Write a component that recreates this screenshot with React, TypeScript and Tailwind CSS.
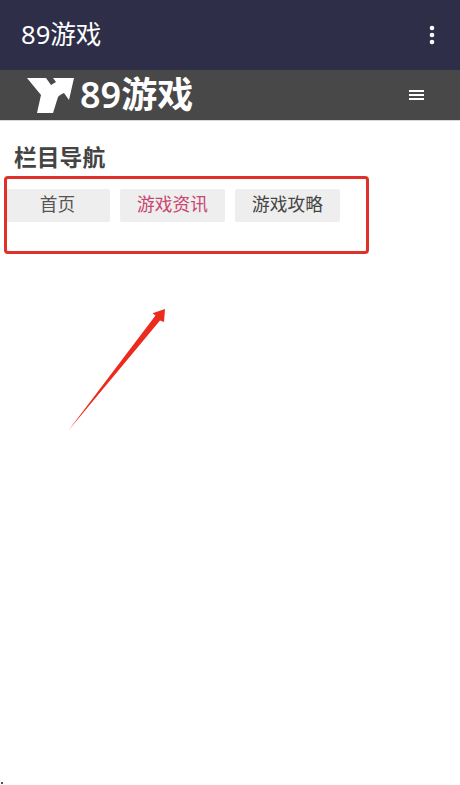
import { EllipsisVertical } from 'lucide-react';

const cjk = { fontFamily: '"Noto Sans", "Noto Sans CJK SC", sans-serif' };

function Logo() {
  return (
    <svg width="48" height="36" viewBox="0 0 48 36" className="shrink-0">
      <path d="M0 1 H19 L24 8 L29 5 L26 1 H47 L42 23 L37 16 C34 17 32 19 31 20 L26 36 H10 L14 18 Z" fill="#fff" />
    </svg>
  );
}

export default function App() {
  const navItems = [
    { label: '首页', color: 'text-[#555555]' },
    { label: '游戏资讯', color: 'text-[#c8466f]' },
    { label: '游戏攻略', color: 'text-[#444444]' },
  ];

  return (
    <div className="relative w-[460px] h-[785px] bg-white overflow-hidden" style={cjk}>
      {/* App bar */}
      <div className="h-[70px] bg-[#2e2e48] flex items-center justify-between pl-[21px] pr-[16px]">
        <span className="text-[25.6px] text-white">89游戏</span>
        <EllipsisVertical size={24} color="#fff" strokeWidth={2.6} />
      </div>

      {/* Site banner */}
      <div className="h-[51px] bg-[#484848] flex items-center justify-between pl-[27px] pr-[36px] border-b border-[#d8d8d8]">
        <div className="flex items-center gap-[5px]">
          <Logo />
          <span className="text-[36px] font-semibold text-white leading-none">89游戏</span>
        </div>
        <div className="flex flex-col gap-[2px]">
          <div className="w-[15px] h-[2px] bg-white" />
          <div className="w-[15px] h-[2px] bg-white" />
          <div className="w-[15px] h-[2px] bg-white" />
        </div>
      </div>

      {/* Column nav */}
      <div className="pl-[5px] pt-[21px]">
        <h2 className="pl-[9px] text-[22.8px] leading-[32px] font-bold text-[#444444]">栏目导航</h2>
        <div className="flex gap-[10px] mt-[15px]">
          {navItems.map((item) => (
            <div
              key={item.label}
              className={`w-[105px] h-[33px] bg-[#eeeeee] rounded-[2px] flex items-center justify-center pb-[2px] text-[17.7px] ${item.color}`}
            >
              {item.label}
            </div>
          ))}
        </div>
      </div>

      {/* Annotation box */}
      <div className="absolute left-[4px] top-[176px] w-[365px] h-[78px] border-[3px] border-[#e0302a] rounded-[4px]" />

      {/* Annotation arrow */}
      <svg className="absolute left-[60px] top-[300px]" width="110" height="135" viewBox="0 0 110 135">
        <path d="M8 131 L95.5 15.5 L92.5 13.3 L105 9 L104 22 L100 20.5 Z" fill="#ec2a1e" />
      </svg>

      {/* Speck in the bottom corner */}
      <div className="absolute left-[1px] top-[782px] w-[2px] h-[2px] bg-[#555555]" />
    </div>
  );
}
